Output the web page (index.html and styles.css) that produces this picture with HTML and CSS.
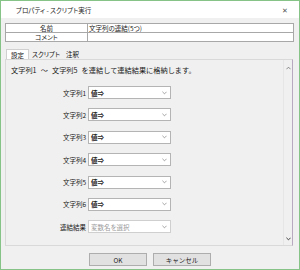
FILE: index.html
```html
<!DOCTYPE html>
<html lang="ja">
<head>
  <meta charset="UTF-8">
  <title>プロパティ - スクリプト実行</title>
  <link rel="stylesheet" href="styles.css">
</head>
<body>
  <div class="window">
    <div class="titlebar">
      <span class="title">プロパティ - スクリプト実行</span>
      <span class="close">✕</span>
    </div>

    <div class="client">
      <table class="props">
        <tr><th>名前</th><td>文字列の連結(5つ)</td></tr>
        <tr><th>コメント</th><td></td></tr>
      </table>

      <div class="tabs">
        <span class="tab active">設定</span>
        <span class="tab">スクリプト</span>
        <span class="tab">注釈</span>
      </div>

      <div class="panel">
        <div class="panel-body">
          <p class="desc">文字列1 ～ 文字列5 を連結して連結結果に格納します。</p>

          <div class="form">
            <label>文字列1</label><div class="combo"><b>値⇒</b><svg class="chev" viewBox="0 0 6 4"><path d="M0.5 0.5 L3 3 L5.5 0.5" /></svg></div>
            <label>文字列2</label><div class="combo"><b>値⇒</b><svg class="chev" viewBox="0 0 6 4"><path d="M0.5 0.5 L3 3 L5.5 0.5" /></svg></div>
            <label>文字列3</label><div class="combo"><b>値⇒</b><svg class="chev" viewBox="0 0 6 4"><path d="M0.5 0.5 L3 3 L5.5 0.5" /></svg></div>
            <label>文字列4</label><div class="combo"><b>値⇒</b><svg class="chev" viewBox="0 0 6 4"><path d="M0.5 0.5 L3 3 L5.5 0.5" /></svg></div>
            <label>文字列5</label><div class="combo"><b>値⇒</b><svg class="chev" viewBox="0 0 6 4"><path d="M0.5 0.5 L3 3 L5.5 0.5" /></svg></div>
            <label>文字列6</label><div class="combo"><b>値⇒</b><svg class="chev" viewBox="0 0 6 4"><path d="M0.5 0.5 L3 3 L5.5 0.5" /></svg></div>
            <label>連結結果</label><div class="combo empty"><span>変数名を選択</span><svg class="chev" viewBox="0 0 6 4"><path d="M0.5 0.5 L3 3 L5.5 0.5" /></svg></div>
          </div>
        </div>

        <div class="scrollbar">
          <svg class="arrow" viewBox="0 0 6 4"><path d="M0.5 3.5 L3 1 L5.5 3.5" /></svg>
          <svg class="arrow down" viewBox="0 0 6 4"><path d="M0.5 0.5 L3 3 L5.5 0.5" /></svg>
        </div>
      </div>

      <div class="buttons">
        <button>OK</button>
        <button>キャンセル</button>
      </div>
    </div>
  </div>
</body>
</html>
```

FILE: styles.css
```css
* {
  box-sizing: border-box;
}
body {
  margin: 0;
  font-family: "Noto Sans CJK JP", "Noto Sans", sans-serif;
  font-feature-settings: "palt";
  font-size: 6.5px;
  color: #1a1a1a;
}
.window {
  width: 300px;
  height: 270px;
  border: 1px solid #86c386;
  background-color: #f0f0f0;
  display: flex;
  flex-direction: column;
}
.titlebar {
  height: 17px;
  background-color: #ffffff;
  display: flex;
  align-items: center;
  justify-content: space-between;
  padding: 0 11px 0 15px;
  flex-shrink: 0;
}
.title {
  font-size: 6.5px;
  color: #222;
}
.close {
  font-size: 7px;
  color: #555;
}
.client {
  flex: 1;
  display: flex;
  flex-direction: column;
  padding: 5px 4px 0 4px;
}
.props {
  width: 289px;
  border-collapse: collapse;
  background-color: #ffffff;
}
.props th, .props td {
  border: 1px solid #a8a8a8;
  height: 9px;
  padding: 0 1px;
  font-weight: normal;
  line-height: 7px;
  white-space: nowrap;
}
.props th {
  width: 82px;
  text-align: center;
}
.tabs {
  display: flex;
  margin-top: 7px;
  height: 10px;
  align-items: flex-end;
}
.tab {
  padding: 0 3px;
  height: 9px;
  line-height: 9px;
  color: #111;
}
.tab.active {
  height: 10px;
  line-height: 10px;
  background-color: #ffffff;
  border: 1px solid #d0d0d0;
  border-bottom: none;
  padding: 0 4px;
  margin-left: 1px;
}
.panel {
  width: 288px;
  height: 187px;
  border: 1px solid #d9d9d9;
  border-right-color: #b8a8c0;
  background-color: #f0f0f0;
  display: flex;
}
.panel-body {
  flex: 1;
  padding: 5px 0 0 5px;
}
.desc {
  margin: 0;
  font-size: 7.2px;
  line-height: 10px;
  word-spacing: 2.5px;
  font-feature-settings: normal;
}
.form {
  display: grid;
  grid-template-columns: 75px 83px;
  column-gap: 2px;
  row-gap: 9.4px;
  margin-top: 11px;
  align-items: center;
}
.form label {
  text-align: right;
  white-space: nowrap;
}
.combo {
  height: 13px;
  background-color: #ffffff;
  border: 1px solid #b4b4b4;
  display: flex;
  align-items: center;
  justify-content: space-between;
  padding: 0 3px 0 2px;
}
.combo b {
  font-weight: bold;
  color: #222;
}
.combo.empty {
  border-color: #cfcfcf;
}
.combo.empty span {
  color: #9a9a9a;
}
.chev {
  width: 5px;
  height: 4px;
  fill: none;
  stroke: #777;
  stroke-width: 0.8;
}
.scrollbar {
  width: 9px;
  border-left: 1px solid #e6e6e6;
  display: flex;
  flex-direction: column;
  justify-content: space-between;
  align-items: center;
  padding: 6px 0 4px 0;
}
.arrow {
  width: 5px;
  height: 4px;
  fill: none;
  stroke: #666;
  stroke-width: 0.9;
}
.arrow.down {
  stroke: #333;
  stroke-width: 1.1;
}
.buttons {
  display: flex;
  justify-content: center;
  gap: 6px;
  margin-top: 7px;
}
button {
  width: 58px;
  height: 13px;
  padding: 0;
  font-family: inherit;
  font-size: 6.5px;
  background-color: #e1e1e1;
  border: 1px solid #adadad;
  color: #222;
}
```
